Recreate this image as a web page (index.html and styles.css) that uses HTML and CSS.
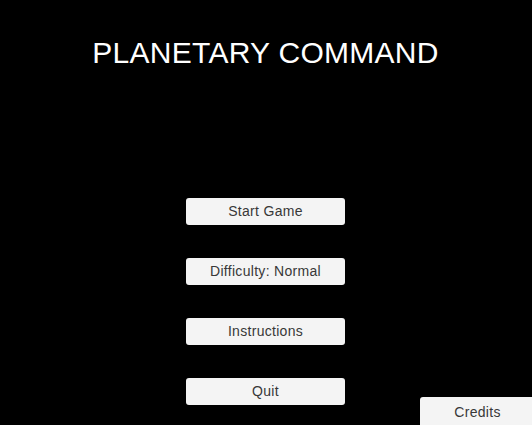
FILE: index.html
```html
<!DOCTYPE html>
<html>
<head>
<meta charset="utf-8">
<link rel="stylesheet" href="styles.css">
</head>
<body>
<div class="screen">
  <h1 class="title">PLANETARY COMMAND</h1>
  <div class="menu">
    <button class="btn">Start Game</button>
    <button class="btn">Difficulty: Normal</button>
    <button class="btn">Instructions</button>
    <button class="btn">Quit</button>
  </div>
  <button class="btn credits">Credits</button>
</div>
</body>
</html>
```
FILE: styles.css
```css
html, body {
  margin: 0;
  padding: 0;
  background: #000;
}
.screen {
  position: relative;
  width: 532px;
  height: 425px;
  overflow: hidden;
  display: flex;
  flex-direction: column;
  align-items: center;
  font-family: "Liberation Sans", Arial, sans-serif;
}
.title {
  margin: 36px 0 0 -1px;
  font-weight: normal;
  font-size: 30px;
  line-height: 34px;
  color: #fff;
  letter-spacing: 0.27px;
}
.menu {
  margin: 128px 1px 0 0;
  display: flex;
  flex-direction: column;
  gap: 33px;
}
.btn {
  width: 159px;
  height: 27px;
  margin: 0;
  padding: 0;
  border: none;
  border-radius: 3px;
  background: #f4f4f4;
  color: #383838;
  font-family: "Liberation Sans", Arial, sans-serif;
  font-size: 14px;
  letter-spacing: 0.3px;
  line-height: 27px;
  text-align: center;
}
.credits {
  position: absolute;
  left: 420px;
  top: 397px;
  width: 115px;
  height: 30px;
  line-height: 28px;
}
```
